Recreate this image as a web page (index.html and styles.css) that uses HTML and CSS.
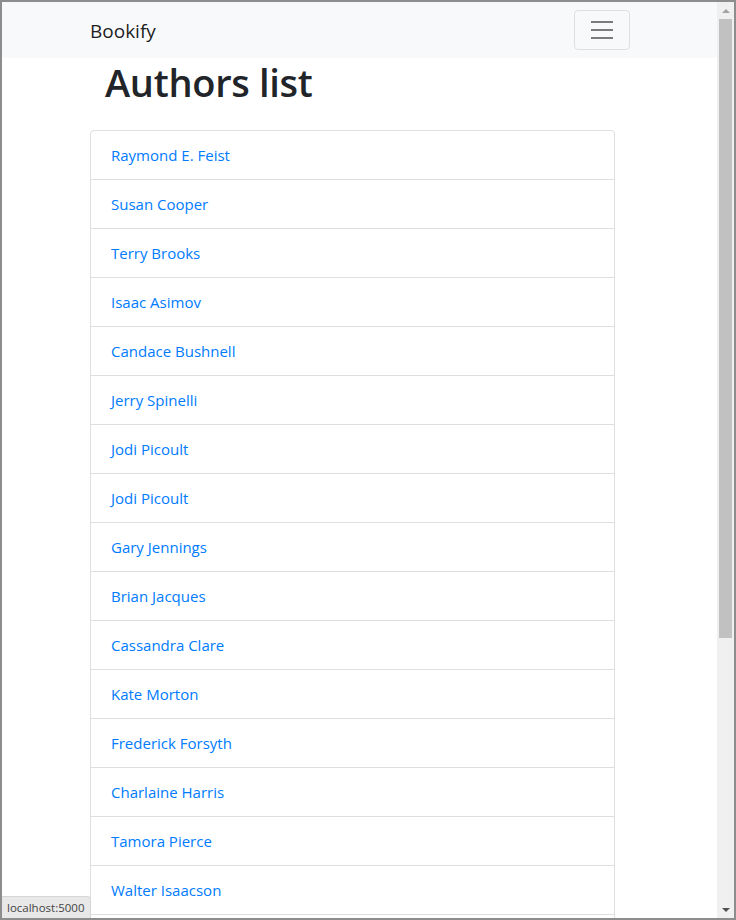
FILE: index.html
```html
<!DOCTYPE html>
<html lang="en">
<head>
<meta charset="utf-8">
<title>Bookify</title>
<link rel="stylesheet" href="styles.css">
</head>
<body>
<div class="window">
  <div class="viewport">
    <nav class="navbar">
      <div class="nav-inner">
        <a class="brand" href="#">Bookify</a>
        <button class="toggler" type="button" aria-label="Toggle navigation">
          <svg width="30" height="30" viewBox="0 0 30 30"><path d="M4 7h22M4 15h22M4 23h22" stroke="rgba(0,0,0,0.5)" stroke-width="2" stroke-linecap="butt"/></svg>
        </button>
      </div>
    </nav>
    <main class="page">
      <h1 class="title">Authors list</h1>
      <ul class="list">
        <li class="item"><a href="#">Raymond E. Feist</a></li>
        <li class="item"><a href="#">Susan Cooper</a></li>
        <li class="item"><a href="#">Terry Brooks</a></li>
        <li class="item"><a href="#">Isaac Asimov</a></li>
        <li class="item"><a href="#">Candace Bushnell</a></li>
        <li class="item"><a href="#">Jerry Spinelli</a></li>
        <li class="item"><a href="#">Jodi Picoult</a></li>
        <li class="item"><a href="#">Jodi Picoult</a></li>
        <li class="item"><a href="#">Gary Jennings</a></li>
        <li class="item"><a href="#">Brian Jacques</a></li>
        <li class="item"><a href="#">Cassandra Clare</a></li>
        <li class="item"><a href="#">Kate Morton</a></li>
        <li class="item"><a href="#">Frederick Forsyth</a></li>
        <li class="item"><a href="#">Charlaine Harris</a></li>
        <li class="item"><a href="#">Tamora Pierce</a></li>
        <li class="item"><a href="#">Walter Isaacson</a></li>
        <li class="item item-empty"></li>
      </ul>
    </main>
    <div class="status">localhost:5000</div>
  </div>
  <div class="scrollbar">
    <div class="arrow up"></div>
    <div class="track"><div class="thumb"></div></div>
    <div class="arrow down"></div>
  </div>
</div>
</body>
</html>
```
FILE: styles.css
```css
* { box-sizing: border-box; }
html, body { margin: 0; padding: 0; background: #fff; overflow: hidden; }
body { font-family: "Open Sans", "Noto Sans", sans-serif; color: #212529; }

.window {
  width: 736px;
  height: 920px;
  border: 2px solid #8d8d8d;
  display: flex;
  background: #fff;
}
.viewport {
  flex: 1;
  position: relative;
  overflow: hidden;
}

.navbar {
  background: #f8f9fa;
  height: 56px;
  padding: 8px 0;
}
.nav-inner {
  width: 540px;
  margin-left: 88px;
  display: flex;
  align-items: center;
  justify-content: space-between;
  height: 40px;
}
.brand {
  font-size: 19px;
  line-height: 30px;
  color: rgba(0,0,0,0.9);
  text-decoration: none;
  padding-top: 2px;
}
.toggler {
  width: 56px;
  height: 40px;
  padding: 4px 12px;
  border: 1px solid rgba(0,0,0,0.1);
  border-radius: 4px;
  background: transparent;
  display: flex;
  align-items: center;
  justify-content: center;
}
.toggler svg { display: block; }

.page {
  margin-left: 88px;
  width: 540px;
}
.title {
  margin: 0 0 24px 15px;
  font-size: 38px;
  font-weight: 600;
  line-height: 48px;
  color: #212529;
  letter-spacing: -0.3px;
}
.list {
  list-style: none;
  margin: 0;
  padding: 0;
  width: 525px;
  border: 1px solid #dfdfdf;
  border-radius: 4px;
}
.item {
  padding: 12px 20px;
  line-height: 24px;
  font-size: 15px;
  border-bottom: 1px solid #dfdfdf;
}
.item:last-child { border-bottom: 0; }
.item-empty { height: 48px; }
.item a {
  color: #007bff;
  text-decoration: none;
}

.status {
  position: absolute;
  left: -1px;
  bottom: 0;
  width: 90px;
  height: 22px;
  background: #e8e8e8;
  border-top: 1px solid #d6d6d6;
  border-right: 1px solid #d6d6d6;
  border-top-right-radius: 4px;
  font-size: 11.5px;
  line-height: 21px;
  padding-left: 6px;
  color: #444;
  white-space: nowrap;
  font-family: "Open Sans", "Noto Sans", sans-serif;
}

.scrollbar {
  width: 17px;
  background: #f0f0f0;
  display: flex;
  flex-direction: column;
}
.arrow {
  height: 17px;
  display: flex;
  align-items: center;
  justify-content: center;
}
.arrow.up::before {
  content: "";
  border-left: 4px solid transparent;
  border-right: 4px solid transparent;
  border-bottom: 4px solid #a3a3a3;
}
.arrow.down::before {
  content: "";
  border-left: 4px solid transparent;
  border-right: 4px solid transparent;
  border-top: 4px solid #505050;
}
.track {
  flex: 1;
  padding: 0 2px;
}
.thumb {
  height: 619px;
  background: #c1c1c1;
}
```
